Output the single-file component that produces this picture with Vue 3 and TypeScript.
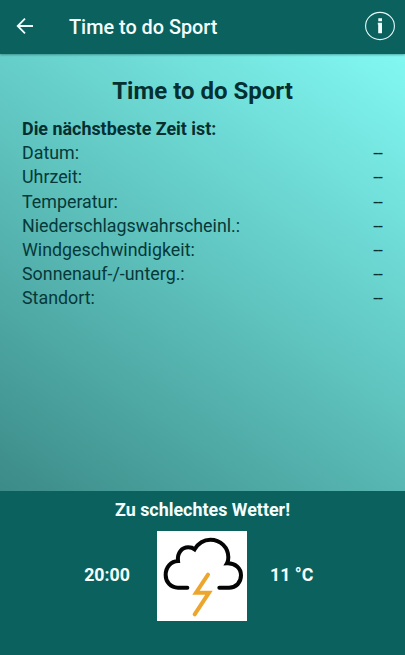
<script setup lang="ts">
interface Row {
  label: string
  value: string
}

const rows: Row[] = [
  { label: 'Datum:', value: '--' },
  { label: 'Uhrzeit:', value: '--' },
  { label: 'Temperatur:', value: '--' },
  { label: 'Niederschlagswahrscheinl.:', value: '--' },
  { label: 'Windgeschwindigkeit:', value: '--' },
  { label: 'Sonnenauf-/-unterg.:', value: '--' },
  { label: 'Standort:', value: '--' },
]
</script>

<template>
  <div class="screen">
    <header class="bar">
      <svg class="back" viewBox="0 0 18 18" aria-label="Zurück">
        <path d="M17 9H2M9 1.7L1.7 9L9 16.3" />
      </svg>
      <span class="bar-title">Time to do Sport</span>
      <svg class="info" viewBox="0 0 30 30" aria-label="Info">
        <ellipse cx="15" cy="15" rx="14.4" ry="13.6" />
        <path d="M13.3 7.2H17V10.2H13.3ZM12.8 11.8H17V22.2H13.2V13.6H12.8Z" />
      </svg>
    </header>
    <main class="content">
      <h1>Time to do Sport</h1>
      <h2>Die nächstbeste Zeit ist:</h2>
      <div v-for="row in rows" :key="row.label" class="row">
        <span>{{ row.label }}</span>
        <span class="value">{{ row.value }}</span>
      </div>
    </main>
    <footer class="forecast">
      <p class="verdict">Zu schlechtes Wetter!</p>
      <div class="details">
        <span class="time">20:00</span>
        <svg class="weather" viewBox="0 0 270 270" aria-label="Gewitter">
          <path
            class="cloud"
            d="M91 170H63C41 170 26 153 26 132C26 108 42 91 63 90C60 66 74 49 94 49C101 49 108 51 113 55C124 36 140 26 160 26C191 26 214 50 214 79C214 87 213 92 210 97C235 96 252 112 252 133C252 155 237 170 216 170H187"
          />
          <path class="bolt" d="M153 131L117 185H156L113 250" />
        </svg>
        <span class="temp">11 °C</span>
      </div>
    </footer>
  </div>
</template>

<style>
body {
  margin: 0;
}
</style>

<style scoped>
.screen {
  display: flex;
  flex-direction: column;
  width: 405px;
  height: 655px;
  overflow: hidden;
  font-family: Roboto, 'Noto Sans', sans-serif;
}

.bar {
  display: flex;
  align-items: center;
  box-sizing: border-box;
  height: 54px;
  padding: 0 10px 2px 16px;
  background: #0b615e;
  color: #f4ffff;
  z-index: 1;
  box-shadow: 0 1px 2px rgba(0, 50, 50, 0.4);
}

.back {
  width: 18px;
  height: 18px;
  fill: none;
  stroke: #f0ffff;
  stroke-width: 1.8;
}

.bar-title {
  flex: 1;
  margin-left: 35px;
  padding-top: 2px;
  font-size: 19.85px;
  font-weight: 500;
}

.info {
  width: 30px;
  height: 30px;
  fill: #f0ffff;
}

.info ellipse {
  fill: none;
  stroke: #e4fafa;
  stroke-width: 1.1;
}

.content {
  box-sizing: border-box;
  height: 437px;
  padding: 21px 22px 0;
  background: linear-gradient(215deg, #82f8f3, #5fc3be 50%, #3c8b88);
  color: #06393a;
}

h1 {
  margin: 0 0 10px;
  font-size: 24px;
  line-height: 32px;
  font-weight: 700;
  text-align: center;
  color: #043032;
}

h2 {
  margin: 0;
  font-size: 17.9px;
  line-height: 24.2px;
  font-weight: 700;
  color: #043032;
}

.row {
  display: flex;
  justify-content: space-between;
  font-size: 17.85px;
  line-height: 24.2px;
}

.value {
  margin-right: 0.5px;
  font-size: 18.4px;
  letter-spacing: -0.4px;
  color: #043032;
}

.forecast {
  flex: 1;
  background: #0b615e;
  color: #f4ffff;
  font-weight: 700;
}

.verdict {
  margin: 0;
  padding: 7px 0 9px;
  font-size: 17.9px;
  line-height: 24px;
  text-align: center;
}

.details {
  display: grid;
  grid-template-columns: 130px 90px 67px;
  column-gap: 27px;
  align-items: center;
  font-size: 17.8px;
}

.time {
  padding-bottom: 3px;
  text-align: right;
}

.temp {
  margin-left: -4px;
  padding-bottom: 3px;
}

.weather {
  width: 90px;
  height: 90px;
  background: #fff;
}

.cloud,
.bolt {
  fill: none;
  stroke: #050505;
  stroke-width: 12;
  stroke-linecap: round;
}

.bolt {
  stroke: #eda62d;
}
</style>
